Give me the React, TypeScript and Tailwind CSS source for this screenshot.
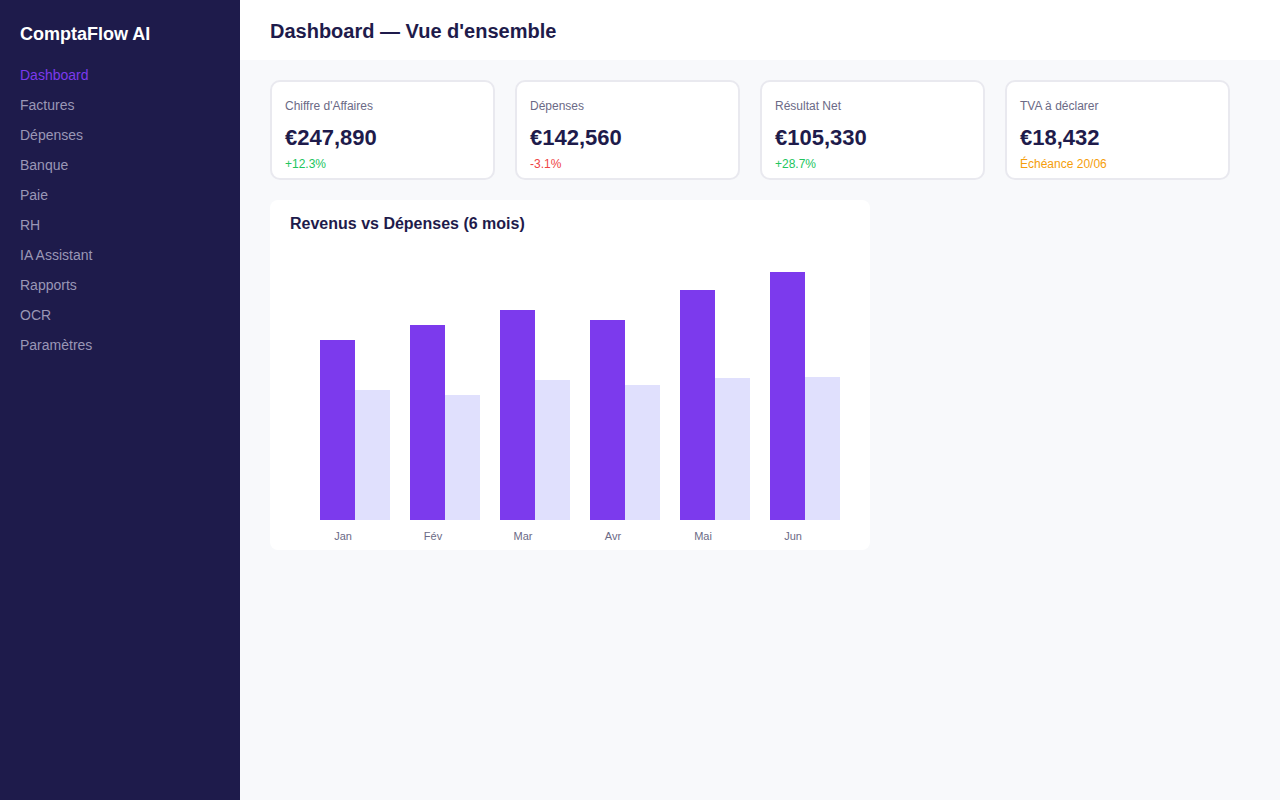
const nav = [
  "Dashboard",
  "Factures",
  "Dépenses",
  "Banque",
  "Paie",
  "RH",
  "IA Assistant",
  "Rapports",
  "OCR",
  "Paramètres",
];

const stats = [
  { label: "Chiffre d'Affaires", value: "€247,890", note: "+12.3%", tone: "text-[#22c55e]" },
  { label: "Dépenses", value: "€142,560", note: "-3.1%", tone: "text-[#ef4444]" },
  { label: "Résultat Net", value: "€105,330", note: "+28.7%", tone: "text-[#22c55e]" },
  { label: "TVA à déclarer", value: "€18,432", note: "Échéance 20/06", tone: "text-[#f59e0b]" },
];

// bar heights in px (revenus, dépenses)
const months = [
  { m: "Jan", r: 180, d: 130 },
  { m: "Fév", r: 195, d: 125 },
  { m: "Mar", r: 210, d: 140 },
  { m: "Avr", r: 200, d: 135 },
  { m: "Mai", r: 230, d: 142 },
  { m: "Jun", r: 248, d: 143 },
];

const Chart = () => {
  const base = 270;
  return (
    <svg width="560" height="300" viewBox="0 0 560 300" className="block">
      {months.map((x, i) => {
        const gx = 30 + i * 90;
        return (
          <g key={x.m}>
            <rect x={gx} y={base - x.r} width="35" height={x.r} fill="#7c3aed" />
            <rect x={gx + 35} y={base - x.d} width="35" height={x.d} fill="#e0e0fd" />
            <text
              x={53 + i * 90}
              y={290}
              textAnchor="middle"
              fontSize="11"
              fill="#6b6a86"
              fontFamily="'Liberation Sans', Arial, sans-serif"
            >
              {x.m}
            </text>
          </g>
        );
      })}
    </svg>
  );
};

export default function App() {
  return (
    <div className="flex min-h-[800px] w-full font-['Liberation_Sans',Arial,sans-serif] bg-[#f8f9fb]">
      <aside className="w-[240px] shrink-0 bg-[#1e1b4b] px-5 pt-[22px]">
        <div className="text-[18px] leading-6 font-bold text-white">ComptaFlow AI</div>
        <nav className="mt-[14px] flex flex-col">
          {nav.map((n, i) => (
            <div
              key={n}
              className={
                i === 0
                  ? "py-[5px] text-sm leading-5 text-[#7c3aed]"
                  : "py-[5px] text-sm leading-5 text-[#9a97b6]"
              }
            >
              {n}
            </div>
          ))}
        </nav>
      </aside>

      <main className="flex-1">
        <header className="h-[60px] bg-white px-[30px] flex items-center">
          <h1 className="text-[20px] font-bold text-[#1e1b4b] leading-7 mt-[2px]">
            Dashboard — Vue d'ensemble
          </h1>
        </header>

        <div className="px-[30px] pt-5">
          <div className="grid grid-cols-4 gap-5 w-[960px]">
            {stats.map((s) => (
              <div
                key={s.label}
                className="h-[100px] rounded-[10px] border-2 border-[#e9e9ef] bg-white px-[13px] pt-[15px]"
              >
                <div className="text-xs leading-[18px] text-[#6b6a86]">{s.label}</div>
                <div className="mt-[9px] text-[22px] leading-7 font-bold text-[#1e1b4b]">{s.value}</div>
                <div className={"mt-1 text-xs leading-4 font-medium " + s.tone}>{s.note}</div>
              </div>
            ))}
          </div>

          <div className="mt-5 w-[600px] h-[350px] rounded-lg bg-white px-5 pt-[15px]">
            <h2 className="text-base leading-[18px] font-bold text-[#1e1b4b]">
              Revenus vs Dépenses (6 mois)
            </h2>
            <div className="mt-[17px]">
              <Chart />
            </div>
          </div>
        </div>
      </main>
    </div>
  );
}
